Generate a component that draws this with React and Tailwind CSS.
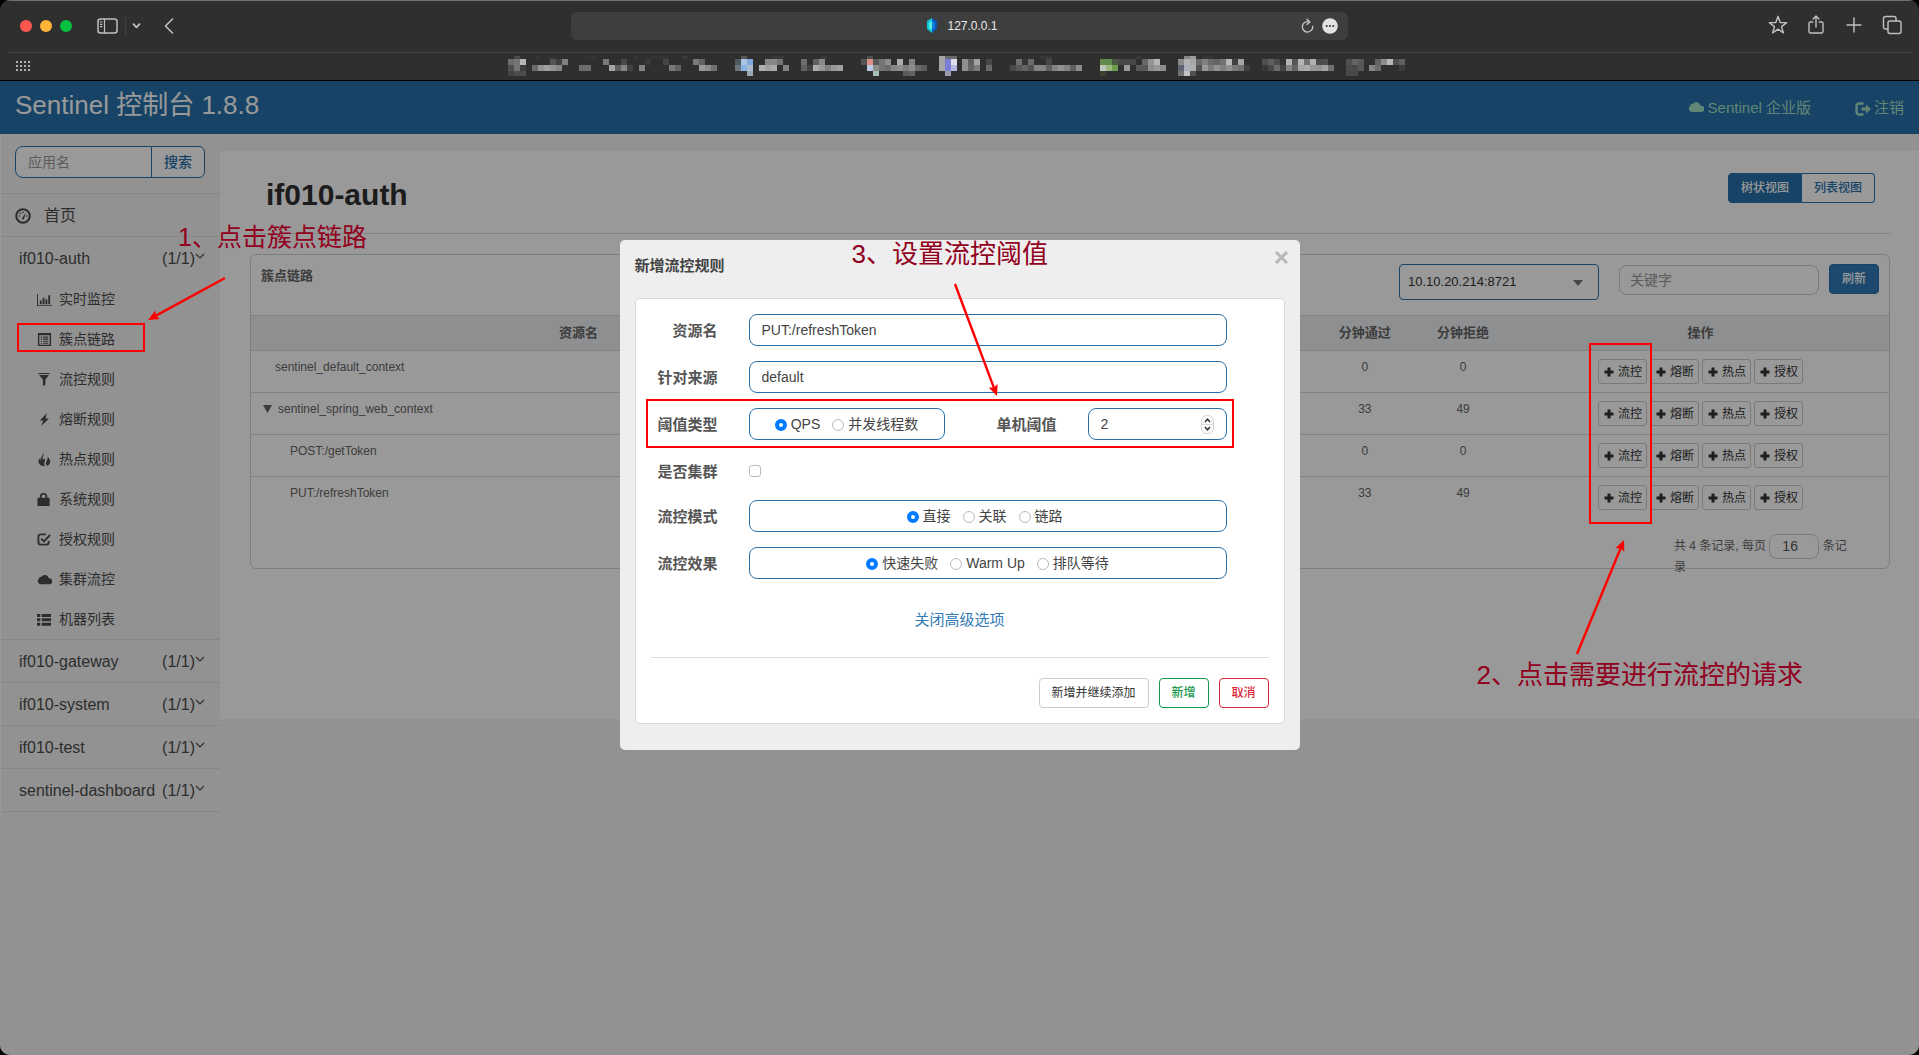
import React from "react";

const BOOKMARK_CELLS = [
  [508, 1, "6c 74 b5"], [514, 0, "4a"], [508, 2, "4f 74 3e"], [508, 3, "42 4c 4c"],
  [532, 2, "6a 94 a0 94 86"], [550, 1, "55 40"], [562, 1, "80"], [536, 0, "36 2f 36"],
  [579, 2, "6e 6e"], [585, 0, "34 34"], [603, 1, "7a"], [609, 2, "a5 5e 86 42"], [621, 1, "48"],
  [639, 2, "82"], [645, 1, "3a"], [633, 0, "36"], [650, 0, "34 34 34"], [663, 1, "46"], [669, 2, "78 62"],
  [693, 1, "78 62"], [699, 2, "98 8c 70"], [682, 0, "38"],
  [741, 0, "58"], [735, 1, "50585f a9c3e3 7fa9dc"], [735, 2, "6c7480 8ab4e6 a8bccb"], [747, 3, "9aa9b4"],
  [759, 2, "b0 a0 aa"], [765, 1, "86 86 76"], [783, 2, "84"], [772, 0, "38 38"],
  [801, 1, "6e"], [801, 2, "60 42 ac 98 80 98 a0"], [813, 1, "60 8a"], [821, 0, "3a"],
  [867, 0, "4e"], [861, 1, "54"], [867, 1, "dc9086 58 76 8c"], [867, 2, "b9c9e2 8c 74 6c 86 8c 7c 8c 6c 5c"],
  [897, 1, "ac"], [909, 1, "84"], [873, 3, "a3c0b2"], [903, 3, "5c 64"],
  [939, 0, "a4 6a 6a"], [939, 1, "a4 7b7fd4 dddeeb"], [939, 2, "a6 7b7fd4 b6b9df"], [945, 3, "9a9cae"],
  [962, 1, "90 60 a4"], [962, 2, "90 64 7c"], [986, 1, "48"], [986, 2, "68"],
  [1010, 2, "48 58 64 54 84 84 60 84 92 84 60 8c"], [1016, 1, "70 36 6a"], [1046, 1, "48"], [1040, 0, "38 38"],
  [1100, 1, "5f8a4b 5f8a4b 4a5a42"], [1100, 2, "bfc4ba 97b77c 6f9e4e"], [1100, 3, "3a4433"],
  [1118, 1, "48 48 48"], [1124, 2, "9a"], [1136, 2, "58 58 8c 98 8c"], [1142, 1, "68 94 b4"], [1136, 0, "3a"],
  [1184, 0, "88 9c"], [1178, 1, "8c b2 a8 6a 80 6a 64 72 b8 40 a4"], [1178, 2, "606470 aab0ba ac 54 98 7a 94 80 90 7a 70 40"],
  [1178, 3, "74 c4 50"], [1202, 0, "36 36"],
  [1262, 1, "50 60 4c 34 b4 56 b4 70 b0 4a 4e"], [1262, 2, "38 48 6a 44 84 64 a6 ac 96 94 a2 70"],
  [1346, 1, "50 62 58"], [1346, 2, "4c 48 58"], [1346, 3, "48 48"], [1375, 1, "64 8c b8 4e 60"], [1369, 2, "86 6a"], [1399, 2, "3c"],
];
const ROW_Y = [0, 3, 9, 15];
const ROW_H = [3, 6, 6, 5];

function BookmarkMosaic() {
  return (
    <svg width="912" height="20" viewBox="504 0 912 20" shapeRendering="crispEdges" aria-hidden="true">
      {BOOKMARK_CELLS.flatMap(([x, row, cells]) =>
        cells.split(" ").map((c, i) => (
          <rect
            key={`${x}-${row}-${i}`}
            x={x + i * 6}
            y={ROW_Y[row]}
            width="6"
            height={ROW_H[row]}
            fill={c.length === 2 ? `#${c}${c}${c}` : `#${c}`}
          />
        ))
      )}
    </svg>
  );
}

function Line({ children }) {
  return (
    <svg width="20" height="20" viewBox="0 0 20 20" fill="none" stroke="currentColor" strokeWidth="1.4" strokeLinecap="round" strokeLinejoin="round" aria-hidden="true">
      {children}
    </svg>
  );
}

function BrowserBar() {
  return (
    <div className="bg-[#2f2f2f] border-t border-[#707070] border-b border-b-black text-[#c0c0c0]">
      <div className="h-[51px] grid grid-cols-[1fr_777px_1fr] items-start">
        <div className="flex items-center h-10 mt-[5px] pl-5">
          <span className="w-3 h-3 rounded-full bg-[#ff5650]" />
          <span className="w-3 h-3 rounded-full bg-[#ffb338] ml-2" />
          <span className="w-3 h-3 rounded-full bg-[#06c13f] ml-2" />
          <button aria-label="边栏" className="ml-[25px]">
            <svg width="21" height="16" viewBox="0 0 21 16" fill="none" stroke="currentColor" strokeWidth="1.5" className="block">
              <rect x="1" y="1" width="19" height="14" rx="2.5" />
              <path d="M7.5 1v14M3 4h2.4M3 6.3h2.4M3 8.6h2.4" strokeWidth="1.2" />
            </svg>
          </button>
          <span className="w-px h-[18px] bg-[#424242] ml-[7px]" />
          <button aria-label="标签页组" className="ml-[6px]">
            <svg width="9" height="6" viewBox="0 0 9 6" fill="none" stroke="currentColor" strokeWidth="1.8" strokeLinecap="round" strokeLinejoin="round"><path d="M1.5 1.2 4.5 4.4 7.5 1.2" /></svg>
          </button>
          <button aria-label="后退" className="ml-[23px]">
            <svg width="10" height="16" viewBox="0 0 10 16" fill="none" stroke="currentColor" strokeWidth="1.6" strokeLinecap="round" strokeLinejoin="round"><path d="M8.5 1 1.5 8l7 7" /></svg>
          </button>
        </div>
        <div className="mt-[11px] h-7 rounded-md bg-[#3e3e3e] grid grid-cols-[1fr_auto_1fr] items-center text-[#e8e8e8]">
          <span />
          <span className="flex items-center gap-[9px] pl-[5px] text-[12px] font-medium">
            <svg width="12" height="16" viewBox="0 0 12 16" aria-hidden="true">
              <path d="M6 0 1 3v8l5 4z" fill="#12c7d6" />
              <path d="M6 0l5 3v8l-5 4z" fill="#0b55b8" />
              <path d="M3 5l3-2v9l-3-2z" fill="#53f0e6" />
              <path d="M6 3l3 2v5l-3 2z" fill="#0a7be0" />
            </svg>
            127.0.0.1
          </span>
          <span className="flex items-center justify-end gap-2 pr-[10px]">
            <button aria-label="重新载入">
              <svg width="13" height="16" viewBox="0 0 13 16" fill="none" stroke="#c8c8c8" strokeWidth="1.3" strokeLinecap="round" strokeLinejoin="round" className="block">
                <path d="M11.7 8.3A5.2 5.2 0 1 1 8.4 4" /><path d="M6 1.2 8.8 4 6 6.6" />
              </svg>
            </button>
            <button aria-label="更多">
              <svg width="16" height="16" viewBox="0 0 16 16" className="block"><circle cx="8" cy="8" r="7.8" fill="#e3e3e3" /><g fill="#3e3e3e"><circle cx="4.7" cy="8" r="1.1" /><circle cx="8" cy="8" r="1.1" /><circle cx="11.3" cy="8" r="1.1" /></g></svg>
            </button>
          </span>
        </div>
        <div className="flex items-center justify-end h-10 mt-1 pr-[17px] gap-[18px]">
          <button aria-label="书签"><Line><path d="M10 1.3 12.2 7.5l6.5.1-5.2 4 1.9 6.3L10 14.1l-5.4 3.8 1.9-6.3-5.2-4 6.5-.1z" /></Line></button>
          <button aria-label="共享"><Line><path d="M6.8 7H4.4a1.4 1.4 0 0 0-1.4 1.4v8.2A1.4 1.4 0 0 0 4.4 18h11.2a1.4 1.4 0 0 0 1.4-1.4V8.4A1.4 1.4 0 0 0 15.600 7h-2.400M10 12V1.200M7 4l3-3 3 3" /></Line></button>
          <button aria-label="新建标签页"><Line><path d="M10 3v14M3 10h14" /></Line></button>
          <button aria-label="标签页概览"><Line><rect x="6" y="6" width="13" height="12.500" rx="2" /><path d="M6 14H3.500A2 2 0 0 1 1.500 12V3.500A2 2 0 0 1 3.500 1.500H12A2 2 0 0 1 14 3.500V6" /></Line></button>
        </div>
      </div>
      <div className="mx-2 border-t border-[#444] h-7 grid grid-cols-[1fr_auto_1fr] items-start">
        <svg width="14" height="10" viewBox="0 0 14 10" fill="#b0b0b0" className="ml-2 mt-2" aria-hidden="true">
          {[0, 4, 8].map((y) => [0, 4, 8, 12].map((x) => <rect key={`${x}-${y}`} x={x} y={y} width="2" height="2" />))}
        </svg>
        <div className="mt-[3px]"><BookmarkMosaic /></div>
        <span />
      </div>
    </div>
  );
}

/* 16px solid icons of the console */
const ICONS = {
  dashboard: (
    <>
      <circle cx="8" cy="8" r="6.800" fill="none" stroke="currentColor" strokeWidth="2" />
      <path d="M7 10.500 10.800 4.500 9 11a1.100 1.100 0 0 1-2-.5z" />
      <circle cx="4.300" cy="8" r=".8" /><circle cx="5.400" cy="5.300" r=".8" /><circle cx="8" cy="4.200" r=".8" /><circle cx="11.700" cy="8" r=".8" />
    </>
  ),
  chart: <path d="M0 2h1v12h15v1H0zM3 9h2v4H3zM6 6h2v7H6zM9 8h2v5H9zM12 3.500h2V13h-2z" />,
  list: <path fillRule="evenodd" d="M1 1h14v14H1zM2.500 3.500v10h11v-10zM4 4.800h1.500v1.200H4zM6.500 4.800H12v1.200H6.500zM4 7h1.500v1.200H4zM6.500 7H12v1.200H6.500zM4 9.200h1.500v1.200H4zM6.500 9.200H12v1.200H6.500zM4 11.400h1.500v1.200H4zM6.500 11.400H12v1.200H6.500z" />,
  filter: <path d="M1.500 1h12v1.200h-12zM2.200 3.200h10.600L9 8v5.500L6.300 15V8z" />,
  flash: <path d="M10.600 1 3 9h3.700L4.600 15 12.800 6.800H9z" />,
  fire: <path d="M7 .5c.8 3-1.600 4.400-1 6.700.3 1 1.300 1.200 1.700.3.300-.8 0-1.600 0-1.600 1.500 1.600 1 3.400.4 4.700-.7 1.800-.5 3.200.5 4.300C4.500 15.200 1.500 13 1.600 10c0-1.600.8-2.600 1.200-3.400.3 1 .3 1.700 1 2.400C3.400 5.500 6.500 4 7 .5zM11.200 3.500c.2 2.300 2.900 4 2.900 6.800 0 2-1.300 3.700-3.400 4.400-1.300-1.400-1.700-2.900-.6-4.600 1.300-2 1.600-4 1.100-6.600z" />,
  lock: <path fillRule="evenodd" d="M3 6V4.500A4 4 0 0 1 6.500 1h1A4 4 0 0 1 11 4.500V6h1.500a1 1 0 0 1 1 1v7a1 1 0 0 1-1 1h-11a1 1 0 0 1-1-1V7a1 1 0 0 1 1-1zM5 6h4V4.500A1.500 1.500 0 0 0 7.500 3h-1A1.500 1.500 0 0 0 5 4.500z" />,
  check: (
    <g fill="none" stroke="currentColor" strokeWidth="2">
      <path d="M9.500 2.500H4A2.500 2.500 0 0 0 1.500 5v6A2.500 2.500 0 0 0 4 13.500h6a2.500 2.500 0 0 0 2.500-2.500V9.500" />
      <path d="M4.500 7 7.500 10 14 3" />
    </g>
  ),
  cloud: <path d="M3.600 13A3.300 3.300 0 0 1 2 7.200 2.400 2.400 0 0 1 4.800 5a4.300 4.300 0 0 1 7.800 1.700A3.200 3.200 0 1 1 12.700 13z" />,
  thlist: <path d="M0 2h3.500v3.200H0zM5 2h10v3.200H5zM0 6.700h3.500v3.200H0zM5 6.700h10v3.200H5zM0 11.400h3.500v3.200H0zM5 11.400h10v3.200H5z" />,
  logout: (
    <>
      <path d="M8.500 2.500H4.500A2.800 2.800 0 0 0 1.500 5.300v5.400a2.800 2.800 0 0 0 3 2.800h4" fill="none" stroke="currentColor" strokeWidth="2.400" />
      <path d="M11 3.500 16 8l-5 4.500V9.600H6.500V6.400H11z" />
    </>
  ),
  plus: <path d="M6 2h4v4h4v4h-4v4H6v-4H2V6h4z" />,
};
function Icon({ name, className = "w-4 h-4" }) {
  return <svg viewBox="0 0 16 16" fill="currentColor" className={className} aria-hidden="true">{ICONS[name]}</svg>;
}

const MENU = [
  ["chart", "实时监控"], ["list", "簇点链路"], ["filter", "流控规则"], ["flash", "熔断规则"], ["fire", "热点规则"],
  ["lock", "系统规则"], ["check", "授权规则"], ["cloud", "集群流控"], ["thlist", "机器列表"],
];

function AppEntry({ name }) {
  return (
    <a href="#" className="flex items-center h-[42px] pt-[2px] pl-[18px] pr-[15px] text-[16px]">
      <span>{name}</span>
      <span className="ml-auto">(1/1)</span>
      <svg width="10" height="7" viewBox="0 0 10 7" fill="none" stroke="currentColor" strokeWidth="1.200" className="mb-[6px]" aria-hidden="true"><path d="M1 1l4 4 4-4" /></svg>
    </a>
  );
}

function Sidebar() {
  return (
    <nav className="w-[220px] shrink-0 text-[#4c4c4c] border-l border-[#fff]">
      <form className="flex h-[59px] pt-3 pl-[14px]">
        <input aria-label="应用名" placeholder="应用名" className="w-[137px] h-8 px-3 text-[14px] bg-white border border-[#2671aa] rounded-l-lg placeholder:text-[#999]" />
        <button type="button" className="w-[54px] h-8 -ml-px bg-white border border-[#2671aa] rounded-r-md text-[14px] font-medium text-[#2671aa]">搜索</button>
      </form>
      <ul>
        <li className="border-t border-[#e1e1e1]">
          <a href="#" className="flex items-center h-[42px] pt-[2px] pl-[14px] gap-[13px] text-[16px]"><Icon name="dashboard" />首页</a>
        </li>
        <li className="border-t border-[#e1e1e1]">
          <AppEntry name="if010-auth" />
          <ul>
            {MENU.map(([icon, label]) => (
              <li key={label}>
                <a href="#" className="flex items-center h-10 pl-9 gap-[7px] text-[14px]"><Icon name={icon} className="w-[15px] h-[15px]" />{label}</a>
              </li>
            ))}
          </ul>
        </li>
        {["if010-gateway", "if010-system", "if010-test", "sentinel-dashboard"].map((n) => (
          <li key={n} className="border-t border-[#e1e1e1] last:border-b"><AppEntry name={n} /></li>
        ))}
      </ul>
    </nav>
  );
}

const ROWS = [
  { name: "sentinel_default_context", pad: "pl-6", pass: 0, reject: 0 },
  { name: "sentinel_spring_web_context", pad: "pl-3", pass: 33, reject: 49, open: true },
  { name: "POST:/getToken", pad: "pl-[39px]", pass: 0, reject: 0 },
  { name: "PUT:/refreshToken", pad: "pl-[39px]", pass: 33, reject: 49 },
];

function Content() {
  return (
    <main className="flex-1 min-w-0">
      <div className="mt-[17px] bg-white pl-[30px] pr-[29px] pb-[150px]">
        <div className="flex items-start justify-between h-[83px] border-b border-[#dcdcdc] pl-4 pr-[15px]">
          <h1 className="text-[30px] leading-[36px] font-bold text-[#303030] mt-[26px]">if010-auth</h1>
          <div className="flex mt-[22px] text-[12px] font-medium">
            <button className="h-[30px] w-[74px] rounded-l bg-[#2671aa] text-white border border-[#2671aa]">树状视图</button>
            <button className="h-[30px] w-[73px] rounded-r bg-white text-[#2671aa] border border-l-0 border-[#2671aa]">列表视图</button>
          </div>
        </div>
        <section className="mt-5 border border-[#d2d2d2] rounded-md text-[#666]">
          <div className="flex items-start h-[60px] pl-[10px] pr-[10px]">
            <h2 className="text-[13px] leading-5 font-bold mt-[11px]">簇点链路</h2>
            <div className="relative ml-auto mt-[9px]">
              <select aria-label="机器" className="appearance-none w-[200px] h-9 px-2 text-[13px] text-[#333] bg-white border border-[#2671aa] rounded-sm">
                <option>10.10.20.214:8721</option>
              </select>
              <svg width="10" height="6" viewBox="0 0 10 6" className="absolute right-4 top-4 pointer-events-none" aria-hidden="true"><path d="M0 0h10L5 6z" fill="#777" /></svg>
            </div>
            <input aria-label="关键字" placeholder="关键字" className="w-[200px] h-[30px] mt-[10px] ml-5 px-[10px] text-[14px] bg-white border border-[#ccc] rounded-lg placeholder:text-[#999]" />
            <button className="w-[50px] h-[30px] mt-[9px] ml-[10px] rounded bg-[#337ab7] border border-[#2671aa] text-white text-[12px] font-medium">刷新</button>
          </div>
          <table className="w-full table-fixed text-[12px] leading-4">
            <colgroup>
              <col className="w-[40%]" /><col className="w-[25%]" /><col className="w-[6%]" /><col className="w-[6%]" /><col className="w-[23%]" />
            </colgroup>
            <thead>
              <tr className="h-[35px] bg-[#edeff2] border-y border-[#d8d8d8] text-[13px]">
                <th>资源名</th><td /><th>分钟通过</th><th>分钟拒绝</th><th>操作</th>
              </tr>
            </thead>
            <tbody>
              {ROWS.map((r) => (
                <tr key={r.name} className="h-[42px] border-b border-[#d8d8d8] last:border-b-0 align-top">
                  <td className={`pt-2 ${r.pad}`}>
                    <span className="flex items-center gap-[6px]">
                      {r.open && <svg width="9" height="8" viewBox="0 0 9 8" aria-hidden="true"><path d="M0 0h9L4.500 8z" fill="#666" /></svg>}
                      {r.name}
                    </span>
                  </td>
                  <td />
                  <td className="pt-2 text-center">{r.pass}</td>
                  <td className="pt-2 text-center">{r.reject}</td>
                  <td className="pt-2">
                    <span className="flex justify-center gap-[3px]">
                      {["流控", "熔断", "热点", "授权"].map((a) => (
                        <button key={a} className="flex items-center justify-between px-1 w-[49px] h-[25px] border border-[#ccc] rounded-[3px] bg-white text-[#333]">
                          <Icon name="plus" className="w-3 h-3" />{a}
                        </button>
                      ))}
                    </span>
                  </td>
                </tr>
              ))}
            </tbody>
          </table>
          <div className="flex justify-end h-[49px] pr-[35px] pt-[17px]">
            <p className="w-[180px] h-0 text-[12px] leading-[21px]">
              共 4 条记录, 每页{" "}
              <input aria-label="每页记录数" defaultValue="16" className="w-[50px] h-[25px] -my-1 pl-3 align-middle text-[14px] text-[#555] bg-white border border-[#ccc] rounded-lg" />{" "}
              条记录
            </p>
          </div>
        </section>
      </div>
    </main>
  );
}

const FIELD = "h-8 border border-[#2671aa] rounded-lg bg-white text-[14px] text-[#444]";
const LABEL = "pt-[2px] text-[15px] font-bold text-[#555]";

function Row({ label, htmlFor, children }) {
  return (
    <div className="flex items-center h-8 mb-[15px]">
      <label htmlFor={htmlFor} className={`w-[82px] mr-[31px] shrink-0 text-right ${LABEL}`}>{label}</label>
      {children}
    </div>
  );
}

function Radios({ name, options, className }) {
  return (
    <div role="radiogroup" className={`flex items-center justify-center gap-3 pt-px ${FIELD} ${className}`}>
      {options.map((o, i) => (
        <label key={o} className="flex items-center gap-1">
          <input type="radio" name={name} defaultChecked={i === 0} className="appearance-none w-3 h-3 rounded-full bg-white border border-[#bbb] checked:border-4 checked:border-[#007aff]" />
          {o}
        </label>
      ))}
    </div>
  );
}

function Modal() {
  return (
    <div role="dialog" aria-label="新增流控规则" className="relative w-[680px] mt-[159px] rounded-[5px] bg-[#eee] px-[15px] pb-[26px]">
      <div className="flex h-[58px]">
        <h2 className="mt-4 text-[15px] leading-5 font-bold text-[#444]">新增流控规则</h2>
        <button aria-label="关闭" className="ml-auto -mr-1 mt-[11px] w-[15px] h-[13px]">
          <svg width="15" height="13" viewBox="0 0 15 13" stroke="#b8b8b8" strokeWidth="3" aria-hidden="true"><path d="M2 1l11 11M13 1 2 12" /></svg>
        </button>
      </div>
      <div className="bg-white border border-[#d8d8d8] rounded-[5px] pt-[15px]">
        <div className="pr-[57px]">
          <Row label="资源名" htmlFor="res"><input id="res" defaultValue="PUT:/refreshToken" className={`flex-1 px-3 ${FIELD}`} /></Row>
          <Row label="针对来源" htmlFor="src"><input id="src" defaultValue="default" className={`flex-1 px-3 ${FIELD}`} /></Row>
          <Row label="阈值类型">
            <Radios name="type" options={["QPS", "并发线程数"]} className="w-[196px]" />
            <label htmlFor="threshold" className={`ml-auto mr-[31px] ${LABEL}`}>单机阈值</label>
            <span className="relative w-[139px]">
              <input id="threshold" type="number" defaultValue="2" className={`w-full block px-3 [appearance:textfield] ${FIELD}`} />
              <svg width="13" height="19" viewBox="0 0 13 19" className="absolute right-[13px] top-[7px]" fill="none" aria-hidden="true">
                <rect x=".5" y=".5" width="12" height="18" rx="5" stroke="#d5d5d5" fill="#fafafa" />
                <path d="M.5 9.500h12" stroke="#ddd" />
                <path d="M4 7l2.500-2.800L9 7M4 12l2.500 2.800L9 12" stroke="#333" strokeWidth="1.500" />
              </svg>
            </span>
          </Row>
          <Row label="是否集群" htmlFor="cluster">
            <input id="cluster" type="checkbox" className="appearance-none w-3 h-3 border border-[#bbb] rounded-[3px] bg-white" />
          </Row>
          <div className="-mt-[2px]">
            <Row label="流控模式"><Radios name="mode" options={["直接", "关联", "链路"]} className="flex-1 pr-[6px]" /></Row>
            <Row label="流控效果"><Radios name="effect" options={["快速失败", "Warm Up", "排队等待"]} className="flex-1" /></Row>
          </div>
        </div>
        <div className="h-[63px] pt-[14px] text-center">
          <a href="#" className="text-[15px] leading-5 text-[#337ab7]">关闭高级选项</a>
        </div>
        <div className="flex justify-end gap-[10px] mx-[15px] pt-5 pb-[15px] border-t border-[#ddd] text-[12px]">
          <button className="w-[110px] h-[30px] bg-white border border-[#ccc] rounded text-[#333]">新增并继续添加</button>
          <button className="w-[50px] h-[30px] bg-white border border-[#149947] rounded text-[#149947] font-medium">新增</button>
          <button className="w-[50px] h-[30px] bg-white border border-[#dc2639] rounded text-[#dc2639] font-medium">取消</button>
        </div>
      </div>
      {/* step 3 */}
      <div className="absolute left-[26px] top-[159px] w-[588px] h-[49px] border-2 border-[#f00] pointer-events-none" />
      <p className={`${NOTE} text-[26px] left-[232px] -top-1`}>3、设置流控阈值</p>
      <Arrow box="left-[320px] top-[40px]" w={70} h={130} from={[15, 4]} to={[57, 116]} />
    </div>
  );
}

const NOTE = "absolute leading-[36px] text-[#920020] whitespace-nowrap";

function Arrow({ box, w, h, from, to }) {
  const angle = (Math.atan2(to[1] - from[1], to[0] - from[0]) * 180) / Math.PI;
  const length = Math.hypot(to[0] - from[0], to[1] - from[1]);
  return (
    <svg width={w} height={h} className={`absolute pointer-events-none ${box}`} aria-hidden="true">
      <g transform={`translate(${to[0]} ${to[1]}) rotate(${angle})`} fill="#f00">
        <path d={`M${-length} -1.200H-7V1.200H${-length}z`} />
        <path d="M0 0-11-4.800-9 0-11 4.800z" />
      </g>
    </svg>
  );
}

export default function App() {
  return (
    <div className="min-h-screen bg-black flex flex-col font-['Liberation_Sans','Noto_Sans_CJK_SC',sans-serif]">
      <div className="relative flex-1 flex flex-col rounded-[10px] overflow-hidden">
        <BrowserBar />
        <div className="relative flex-1 flex flex-col bg-[#f4f4f4]">
          <header className="flex items-center justify-between h-[53px] bg-[#2671aa] px-[15px]">
            <h1 className="text-[26px] leading-[30px] text-white mb-[6px]">Sentinel 控制台 1.8.8</h1>
            <div className="flex gap-11 mt-[2px] text-[15px] text-[#a3dfc4]">
              <a href="#" className="flex items-center gap-1"><Icon name="cloud" className="w-4 h-4 mb-1" />Sentinel 企业版</a>
              <a href="#" className="flex items-center gap-[3px]"><Icon name="logout" />注销</a>
            </div>
          </header>
          <div className="flex flex-1 items-start">
            <Sidebar />
            <Content />
          </div>
          <div className="absolute inset-0 bg-black/40 flex justify-center items-start">
            <Modal />
          </div>
        </div>
        {/* step 1 */}
        <div className="absolute left-[17px] top-[323px] w-[128px] h-[29px] border-2 border-[#f00] pointer-events-none" />
        <p className={`${NOTE} text-[25px] left-[178px] top-[219px]`}>1、点击簇点链路</p>
        <Arrow box="left-[140px] top-[270px]" w={90} h={60} from={[85, 8]} to={[8, 50]} />
        {/* step 2 */}
        <div className="absolute right-[267px] top-[343px] w-[63px] h-[181px] border-2 border-[#f00] pointer-events-none" />
        <p className={`${NOTE} text-[26px] right-[116px] top-[657px]`}>2、点击需要进行流控的请求</p>
        <Arrow box="right-[288px] top-[530px]" w={60} h={130} from={[6, 124]} to={[53, 10]} />
      </div>
    </div>
  );
}
